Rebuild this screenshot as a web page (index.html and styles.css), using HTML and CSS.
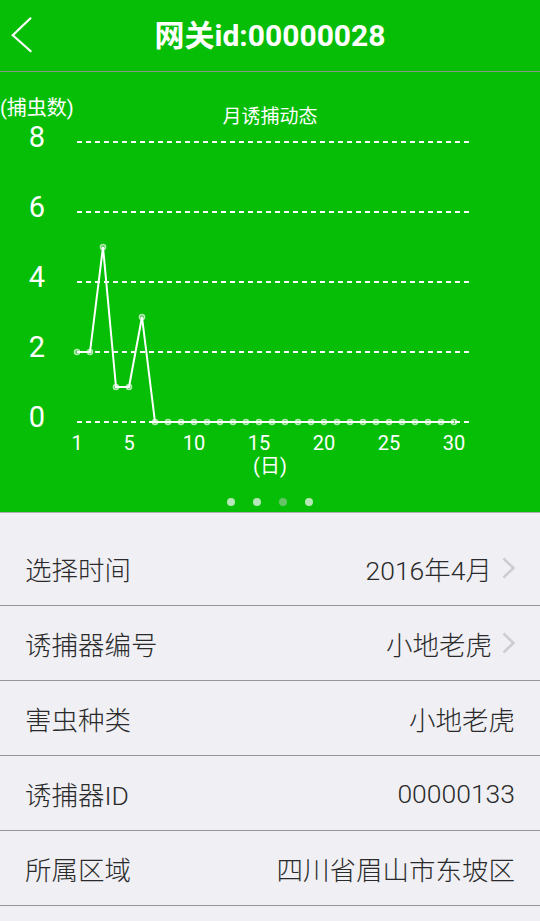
FILE: index.html
```html
<!DOCTYPE html>
<html lang="zh-CN">
<head>
<meta charset="utf-8">
<title>网关id:00000028</title>
<link rel="stylesheet" href="styles.css">
</head>
<body>
<div class="app">
  <header class="topbar">
    <div class="back">
      <svg class="back-icon" width="24" height="38" viewBox="0 0 24 38">
        <polyline points="20,0.8 1.8,18.2 20.3,34.8" fill="none" stroke="#fff" stroke-width="2.2"/>
      </svg>
    </div>
    <h1 class="title">网关id:00000028</h1>
    <div class="spacer"></div>
  </header>

  <section class="chart">
    <svg class="chart-svg" width="540" height="420" viewBox="0 0 540 420">
      <g class="grid" stroke="#fff" stroke-width="2" stroke-dasharray="5 4">
        <line x1="77" y1="70" x2="471" y2="70"/>
        <line x1="77" y1="140" x2="471" y2="140"/>
        <line x1="77" y1="210" x2="471" y2="210"/>
        <line x1="77" y1="280" x2="471" y2="280"/>
        <line x1="77" y1="350" x2="471" y2="350"/>
      </g>
      <text class="unit" x="0" y="43">(捕虫数)</text>
      <text class="caption" x="270" y="51" text-anchor="middle">月诱捕动态</text>
      <g class="ylabels" text-anchor="middle">
        <text x="37" y="75">8</text>
        <text x="37" y="145">6</text>
        <text x="37" y="215">4</text>
        <text x="37" y="285">2</text>
        <text x="37" y="355">0</text>
      </g>
      <g class="xlabels" text-anchor="middle">
        <text x="77" y="378">1</text>
        <text x="129" y="378">5</text>
        <text x="194" y="378">10</text>
        <text x="259" y="378">15</text>
        <text x="324" y="378">20</text>
        <text x="389" y="378">25</text>
        <text x="454" y="378">30</text>
        <text x="270" y="401">(日)</text>
      </g>
      <polyline fill="none" stroke="#fff" stroke-width="2" stroke-linejoin="miter"
        points="77,280 90,280 103,175 116,315 129,315 142,245 155,350 168,350 181,350 194,350 207,350 220,350 233,350 246,350 259,350 272,350 285,350 298,350 311,350 324,350 337,350 350,350 363,350 376,350 389,350 402,350 415,350 428,350 441,350 454,350"/>
      <g class="pts" fill="rgba(255,255,255,0.35)" stroke="rgba(255,255,255,0.65)" stroke-width="1.4">
        <circle cx="77" cy="280" r="2.6"/><circle cx="90" cy="280" r="2.6"/><circle cx="103" cy="175" r="2.6"/>
        <circle cx="116" cy="315" r="2.6"/><circle cx="129" cy="315" r="2.6"/><circle cx="142" cy="245" r="2.6"/>
        <circle cx="155" cy="350" r="2.6"/><circle cx="168" cy="350" r="2.6"/><circle cx="181" cy="350" r="2.6"/>
        <circle cx="194" cy="350" r="2.6"/><circle cx="207" cy="350" r="2.6"/><circle cx="220" cy="350" r="2.6"/>
        <circle cx="233" cy="350" r="2.6"/><circle cx="246" cy="350" r="2.6"/><circle cx="259" cy="350" r="2.6"/>
        <circle cx="272" cy="350" r="2.6"/><circle cx="285" cy="350" r="2.6"/><circle cx="298" cy="350" r="2.6"/>
        <circle cx="311" cy="350" r="2.6"/><circle cx="324" cy="350" r="2.6"/><circle cx="337" cy="350" r="2.6"/>
        <circle cx="350" cy="350" r="2.6"/><circle cx="363" cy="350" r="2.6"/><circle cx="376" cy="350" r="2.6"/>
        <circle cx="389" cy="350" r="2.6"/><circle cx="402" cy="350" r="2.6"/><circle cx="415" cy="350" r="2.6"/>
        <circle cx="428" cy="350" r="2.6"/><circle cx="441" cy="350" r="2.6"/><circle cx="454" cy="350" r="2.6"/>
      </g>
    </svg>
    <div class="pager">
      <span class="dot"></span>
      <span class="dot"></span>
      <span class="dot dot-active"></span>
      <span class="dot"></span>
    </div>
  </section>

  <ul class="list">
    <li class="row">
      <span class="label">选择时间</span>
      <span class="value">2016年4月<svg class="chev" width="13" height="22" viewBox="0 0 13 22"><polyline points="1.5,1.5 11.5,11 1.5,20.5" fill="none" stroke="#cdcdd1" stroke-width="2.6"/></svg></span>
    </li>
    <li class="row">
      <span class="label">诱捕器编号</span>
      <span class="value">小地老虎<svg class="chev" width="13" height="22" viewBox="0 0 13 22"><polyline points="1.5,1.5 11.5,11 1.5,20.5" fill="none" stroke="#cdcdd1" stroke-width="2.6"/></svg></span>
    </li>
    <li class="row">
      <span class="label">害虫种类</span>
      <span class="value">小地老虎</span>
    </li>
    <li class="row">
      <span class="label">诱捕器ID</span>
      <span class="value">00000133</span>
    </li>
    <li class="row">
      <span class="label">所属区域</span>
      <span class="value">四川省眉山市东坡区</span>
    </li>
  </ul>
</div>
</body>
</html>
```

FILE: styles.css
```css
html, body {
  margin: 0;
  padding: 0;
}
body {
  background: #efeff4;
  font-family: Roboto, "Noto Sans CJK SC", "DejaVu Sans", sans-serif;
  width: 540px;
  height: 921px;
  overflow: hidden;
}
.app {
  width: 540px;
}
.topbar {
  height: 71px;
  background: #06be06;
  border-bottom: 1px solid #86988a;
  display: grid;
  grid-template-columns: 60px 1fr 60px;
  align-items: center;
}
.back {
  padding-left: 11px;
  display: flex;
  align-items: center;
}
.back-icon {
  display: block;
}
.title {
  margin: 0;
  text-align: center;
  color: #fff;
  font-size: 30px;
  font-weight: bold;
  line-height: 1;
}
.chart {
  height: 440px;
  background: #06be06;
  border-bottom: 1px solid #a9aeb0;
  display: flex;
  flex-direction: column;
}
.chart-svg {
  display: block;
}
.chart-svg text {
  fill: #fff;
  font-family: Roboto, "Noto Sans CJK SC", sans-serif;
}
.unit {
  font-size: 20px;
}
.caption {
  font-size: 19px;
}
.ylabels text {
  font-size: 29px;
}
.xlabels text {
  font-size: 20px;
}
.pager {
  height: 20px;
  display: flex;
  justify-content: center;
  align-items: center;
  gap: 18px;
}
.dot {
  width: 8px;
  height: 8px;
  border-radius: 50%;
  background: #b6e7b6;
}
.dot-active {
  background: #66c466;
}
.list {
  list-style: none;
  margin: 0;
  padding: 18px 0 0 0;
}
.row {
  height: 74px;
  border-bottom: 1px solid #96969a;
  display: flex;
  align-items: center;
  justify-content: space-between;
  padding: 0 25px;
  font-size: 26.5px;
  font-weight: 300;
  color: #2a2a2a;
}
.value {
  display: flex;
  align-items: center;
}
.chev {
  display: block;
  margin-left: 10px;
}
```
